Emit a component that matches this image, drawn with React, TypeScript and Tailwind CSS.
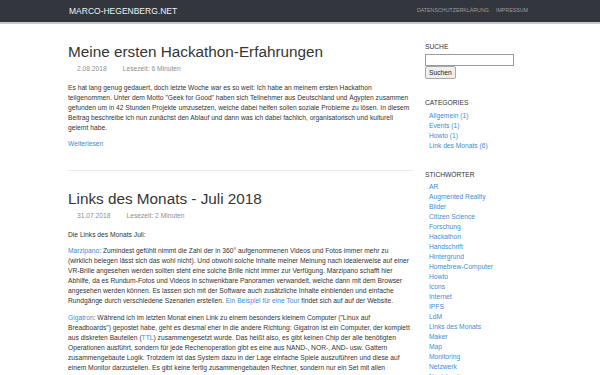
import React from "react"

// ─── Data ─────────────────────────────────────────────────────────────────────

const CATEGORIES = ["Allgemein (1)", "Events (1)", "Howto (1)", "Link des Monats (6)"]

const TAGS = [
  "AR", "Augmented Reality", "Bilder", "Citizen Science", "Forschung", "Hackathon",
  "Handschrift", "Hintergrund", "Homebrew-Computer", "Howto", "Icons", "Internet",
  "IPFS", "LdM", "Links des Monats", "Maker", "Map", "Monitoring", "Netzwerk",
  "Nextcloud", "Open Source",
]

const LINK = "text-[#3a8ed8] hover:underline"

// ─── Pieces ───────────────────────────────────────────────────────────────────

function Header() {
  return (
    <header className="h-[24px] bg-[#33373d] border-b-2 border-[#c6c8cb]">
      <div className="ml-[69px] w-[459px] h-[22px] flex items-center justify-between">
        <a className="text-[8.5px] text-[#f2f2f2] uppercase">marco-hegenberg.net</a>
        <nav className="flex items-center gap-[7px] text-[5.3px] text-[#9a9da1] uppercase">
          <a>Datenschutzerklärung</a>
          <a>Impressum</a>
        </nav>
      </div>
    </header>
  )
}

function Meta({ date, time }: { date: string; time: string }) {
  return (
    <div className="mt-[3px] h-[10px] leading-[10px] flex text-[6.7px] text-[#8f8f8f]">
      <span className="pl-[9px]">{date}</span>
      <span className="ml-[16px]">Lesezeit: {time}</span>
    </div>
  )
}

function SideHeading({ children, top }: { children: React.ReactNode; top: string }) {
  return <h4 className={`${top} h-[10px] leading-[10px] uppercase text-[#333]`}>{children}</h4>
}

// ─── Main ─────────────────────────────────────────────────────────────────────

export default function App() {
  return (
    <div
      className="h-[375px] overflow-hidden bg-white text-[#333]"
      style={{ fontFamily: '"Liberation Sans", Arial, sans-serif' }}>
      <Header />

      <div className="flex">
        {/* Posts */}
        <main className="ml-[68px] w-[345px] text-[6.7px] leading-[10px]">
          <article>
            <h2 className="mt-[19px] text-[15.3px] leading-[18px] text-[#353535]">
              Meine ersten Hackathon-Erfahrungen
            </h2>
            <Meta date="2.08.2018" time="6 Minuten" />
            <p className="mt-[9px]">
              Es hat lang genug gedauert, doch letzte Woche war es so weit: Ich habe an meinem ersten Hackathon
              teilgenommen. Unter dem Motto "Geek for Good" haben sich Teilnehmer aus Deutschland und Ägypten zusammen
              gefunden um in 42 Stunden Projekte umzusetzen, welche dabei helfen sollen soziale Probleme zu lösen. In diesem
              Beitrag beschreibe ich nun zunächst den Ablauf und dann was ich dabei fachlich, organisatorisch und kulturell
              gelernt habe.
            </p>
            <p className="mt-[6px]"><a className={LINK}>Weiterlesen</a></p>
          </article>

          <hr className="mt-[21px] border-t border-[#eaeaea]" />

          <article>
            <h2 className="mt-[19px] text-[15.3px] leading-[18px] text-[#353535]">
              Links des Monats - Juli 2018
            </h2>
            <Meta date="31.07.2018" time="2 Minuten" />
            <p className="mt-[9px]">Die Links des Monats Juli:</p>
            <p className="mt-[6px]">
              <a className={LINK}>Marzipano</a>: Zumindest gefühlt nimmt die Zahl der in 360° aufgenommenen Videos und
              Fotos immer mehr zu (wirklich belegen lässt sich das wohl nicht). Und obwohl solche Inhalte meiner Meinung
              nach idealerweise auf einer VR-Brille angesehen werden sollten steht eine solche Brille nicht immer zur
              Verfügung. Marzipano schafft hier Abhilfe, da es Rundum-Fotos und Videos in schwenkbare Panoramen
              verwandelt, welche dann mit dem Browser angesehen werden können. Es lassen sich mit der Software auch
              zusätzliche Inhalte einblenden und einfache Rundgänge durch verschiedene Szenarien erstellen.{" "}
              <a className={LINK}>Ein Beispiel für eine Tour</a> findet sich auf auf der Website.
            </p>
            <p className="mt-[7px]">
              <a className={LINK}>Gigatron</a>: Während ich im letzten Monat einen Link zu einem besonders kleinem
              Computer ("Linux auf Breadboards") gepostet habe, geht es diesmal eher in die andere Richtung: Gigatron ist
              ein Computer, der komplett aus diskreten Bauteilen (<a className={LINK}>TTL</a>) zusammengesetzt wurde. Das
              heißt also, es gibt keinen Chip der alle benötigten Operationen ausführt, sondern für jede Rechenoperation
              gibt es eine aus NAND-, NOR-, AND- usw. Gattern zusammengebaute Logik. Trotzdem ist das System dazu in der
              Lage einfache Spiele auszuführen und diese auf einem Monitor darzustellen. Es gibt keine fertig
              zusammengebauten Rechner, sondern nur ein Set mit allen Bauteilen, das selbst zusammengelötet werden muss.
            </p>
          </article>
        </main>

        {/* Sidebar */}
        <aside className="ml-[12px] w-[130px] text-[6.7px] leading-[10px]">
          <SideHeading top="mt-[18px]">Suche</SideHeading>
          <div className="mt-[2px] flex flex-col items-start">
            <input type="text" className="w-[89px] h-[12px] border border-[#9b9b9b] bg-white outline-none" />
            <button className="h-[13px] px-[3px] text-[6.7px] leading-[10px] text-[#222] bg-[#efefef] border border-[#a8a8a8] rounded-[2px]">
              Suchen
            </button>
          </div>

          <SideHeading top="mt-[19px]">Categories</SideHeading>
          <ul className="mt-[3px] pl-[4px]">
            {CATEGORIES.map((c) => (
              <li key={c}><a className={LINK}>{c}</a></li>
            ))}
          </ul>

          <SideHeading top="mt-[19px]">Stichwörter</SideHeading>
          <ul className="mt-[2px] pl-[4px]">
            {TAGS.map((t) => (
              <li key={t}><a className={LINK}>{t}</a></li>
            ))}
          </ul>
        </aside>
      </div>
    </div>
  )
}
